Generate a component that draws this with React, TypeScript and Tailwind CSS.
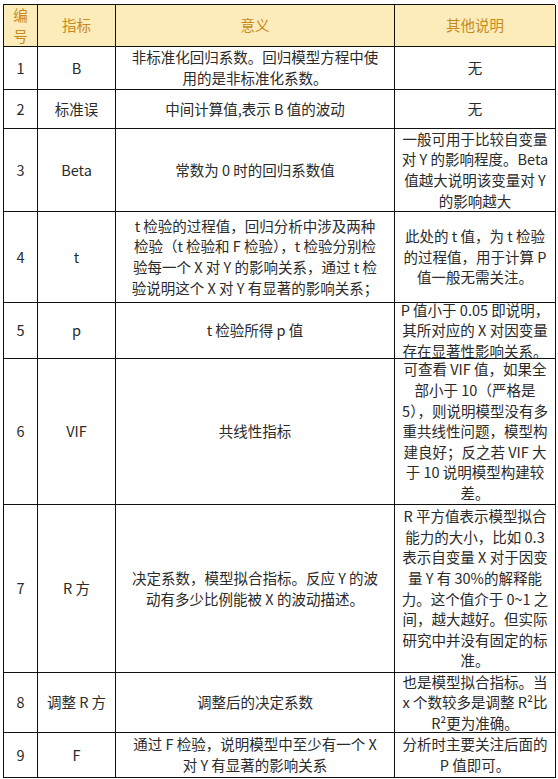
import React from "react";

type Row = {
  no: string;
  name: string;
  meaning: string[];
  note: string[];
};

const rows: Row[] = [
  {
    no: "1",
    name: "B",
    meaning: ["非标准化回归系数。回归模型方程中使", "用的是非标准化系数。"],
    note: ["无"],
  },
  {
    no: "2",
    name: "标准误",
    meaning: ["中间计算值,表示 B 值的波动"],
    note: ["无"],
  },
  {
    no: "3",
    name: "Beta",
    meaning: ["常数为 0 时的回归系数值"],
    note: ["一般可用于比较自变量", "对 Y 的影响程度。Beta", "值越大说明该变量对 Y", "的影响越大"],
  },
  {
    no: "4",
    name: "t",
    meaning: [
      "t 检验的过程值，回归分析中涉及两种",
      "检验（t 检验和 F 检验），t 检验分别检",
      "验每一个 X 对 Y 的影响关系，通过 t 检",
      "验说明这个 X 对 Y 有显著的影响关系；",
    ],
    note: ["此处的 t 值，为 t 检验", "的过程值，用于计算 P", "值一般无需关注。"],
  },
  {
    no: "5",
    name: "p",
    meaning: ["t 检验所得 p 值"],
    note: ["P 值小于 0.05 即说明，", "其所对应的 X 对因变量", "存在显著性影响关系。"],
  },
  {
    no: "6",
    name: "VIF",
    meaning: ["共线性指标"],
    note: [
      "可查看 VIF 值，如果全",
      "部小于 10（严格是",
      "5），则说明模型没有多",
      "重共线性问题，模型构",
      "建良好；反之若 VIF 大",
      "于 10 说明模型构建较",
      "差。",
    ],
  },
  {
    no: "7",
    name: "R 方",
    meaning: ["决定系数，模型拟合指标。反应 Y 的波", "动有多少比例能被 X 的波动描述。"],
    note: [
      "R 平方值表示模型拟合",
      "能力的大小，比如 0.3",
      "表示自变量 X 对于因变",
      "量 Y 有 30%的解释能",
      "力。这个值介于 0~1 之",
      "间，越大越好。但实际",
      "研究中并没有固定的标",
      "准。",
    ],
  },
  {
    no: "8",
    name: "调整 R 方",
    meaning: ["调整后的决定系数"],
    note: ["也是模型拟合指标。当", "x 个数较多是调整 R²比", "R²更为准确。"],
  },
  {
    no: "9",
    name: "F",
    meaning: ["通过 F 检验，说明模型中至少有一个 X", "对 Y 有显著的影响关系"],
    note: ["分析时主要关注后面的", "P 值即可。"],
  },
];

const cell =
  "border-r border-b border-[#111] flex flex-col items-center justify-center text-center";

const Lines = ({ lines }: { lines: string[] }) => (
  <>
    {lines.map((l, i) => (
      <div key={i} className="whitespace-nowrap">
        {l}
      </div>
    ))}
  </>
);

export default function App() {
  return (
    <div
      className="min-h-screen bg-white pt-[4px] pl-[3px] text-[14.5px] leading-[20.6px] text-[#2a2a2a]"
      style={{ fontFamily: '"Noto Sans CJK SC", "Noto Sans", sans-serif' }}
    >
      <div className="grid w-[552px] grid-cols-[34px_78px_279px_161px] grid-rows-[42px_43px_39px_83px_91px_56px_146px_168px_60px_45px] border-l border-t border-[#111]">
        <div className={`${cell} bg-[#fcecb9] text-[#c8891c]`}>
          <div>编</div>
          <div>号</div>
        </div>
        <div className={`${cell} bg-[#fcecb9] text-[#c8891c]`}>指标</div>
        <div className={`${cell} bg-[#fcecb9] text-[#c8891c]`}>意义</div>
        <div className={`${cell} bg-[#fcecb9] text-[#c8891c]`}>其他说明</div>
        {rows.map((r) => (
          <React.Fragment key={r.no}>
            <div className={cell}>{r.no}</div>
            <div className={cell}>{r.name}</div>
            <div className={cell}>
              <Lines lines={r.meaning} />
            </div>
            <div className={cell}>
              <Lines lines={r.note} />
            </div>
          </React.Fragment>
        ))}
      </div>
    </div>
  );
}
